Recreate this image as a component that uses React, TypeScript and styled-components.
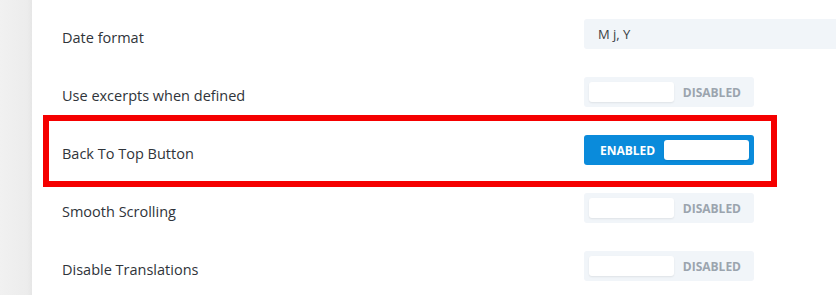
import React from 'react';
import styled, { createGlobalStyle } from 'styled-components';

const GlobalStyle = createGlobalStyle`
  html, body {
    margin: 0;
    padding: 0;
    background: #fff;
    overflow: hidden;
  }
  body {
    font-family: 'Open Sans', 'Liberation Sans', sans-serif;
  }
`;

type Setting =
  | { label: string; kind: 'text'; value: string; highlight?: boolean }
  | { label: string; kind: 'toggle'; on: boolean; highlight?: boolean };

const settings: Setting[] = [
  { label: 'Date format', kind: 'text', value: 'M j, Y' },
  { label: 'Use excerpts when defined', kind: 'toggle', on: false },
  { label: 'Back To Top Button', kind: 'toggle', on: true, highlight: true },
  { label: 'Smooth Scrolling', kind: 'toggle', on: false },
  { label: 'Disable Translations', kind: 'toggle', on: false },
];

const App = () => {
  return (
    <>
      <GlobalStyle />
      <Page>
        <SideStrip />
        <Panel>
          {settings.map((s) => (
            <Row key={s.label} $highlight={!!s.highlight}>
              <Label>{s.label}</Label>
              <Control>
                {s.kind === 'text' ? (
                  <TextField>{s.value}</TextField>
                ) : (
                  <Toggle $on={s.on}>
                    {s.on ? (
                      <>
                        <ToggleText $on>Enabled</ToggleText>
                        <Knob />
                      </>
                    ) : (
                      <>
                        <Knob />
                        <ToggleText $on={false}>Disabled</ToggleText>
                      </>
                    )}
                  </Toggle>
                )}
              </Control>
            </Row>
          ))}
        </Panel>
      </Page>
    </>
  );
};

export default App;

const Page = styled.div`
  display: flex;
  width: 836px;
  height: 295px;
  overflow: hidden;
`;

const SideStrip = styled.div`
  width: 32px;
  flex-shrink: 0;
  background: linear-gradient(to right, #f1f1f1, #ececec 85%, #e6e6e6);
`;

const Panel = styled.div`
  flex: 1;
  min-width: 0;
  padding: 5px 0 0 30px;
  display: flex;
  flex-direction: column;
`;

const Row = styled.div<{ $highlight: boolean }>`
  position: relative;
  height: 58px;
  flex-shrink: 0;
  display: flex;
  align-items: center;

  ${({ $highlight }) =>
    $highlight &&
    `
    &::after {
      content: '';
      position: absolute;
      top: -6px;
      bottom: -8px;
      left: -19px;
      width: 734px;
      box-sizing: border-box;
      border: 6px solid #f50000;
      pointer-events: none;
    }
  `}
`;

const Label = styled.div`
  width: 522px;
  flex-shrink: 0;
  margin-top: 7px;
  font-size: 14.5px;
  color: #2f343a;
`;

const Control = styled.div`
  flex: 1;
  display: flex;
  min-width: 0;
  overflow: hidden;
`;

const TextField = styled.div`
  flex: 1;
  height: 30px;
  box-sizing: border-box;
  padding: 0 14px;
  display: flex;
  align-items: center;
  background: #f1f5f9;
  border-radius: 3px 0 0 3px;
  font-size: 13px;
  color: #3a3f45;
`;

const Toggle = styled.div<{ $on: boolean }>`
  width: 170px;
  height: 30px;
  box-sizing: border-box;
  padding: 5px;
  display: flex;
  align-items: center;
  justify-content: space-between;
  border-radius: 3px;
  background: ${({ $on }) => ($on ? '#0a8bdb' : '#f1f5f9')};
`;

const Knob = styled.div`
  width: 85px;
  height: 20px;
  background: #fff;
  border-radius: 3px;
  box-shadow: 0 1px 2px rgba(0, 0, 0, 0.08);
`;

const ToggleText = styled.span<{ $on: boolean }>`
  font-size: 12px;
  font-weight: 700;
  text-transform: uppercase;
  color: ${({ $on }) => ($on ? '#fff' : '#9ba4ae')};
  padding: ${({ $on }) => ($on ? '0 0 0 11px' : '0 8px 0 0')};
`;
